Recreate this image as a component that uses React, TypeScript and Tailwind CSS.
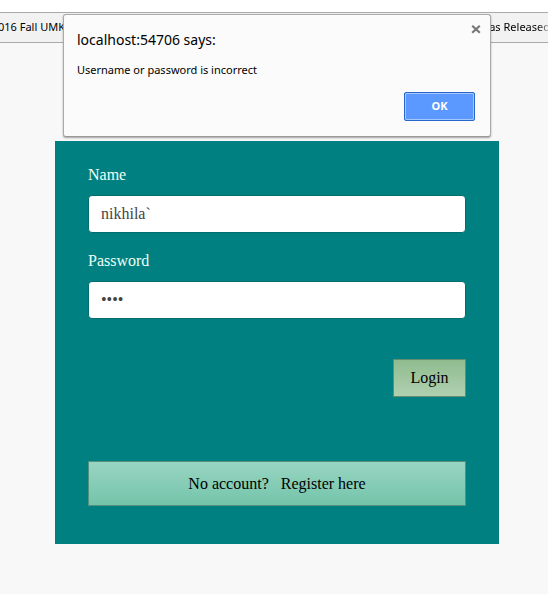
import { useState } from "react";

function BookmarksBar() {
  return (
    <nav
      aria-label="Bookmarks"
      className="mt-3 flex h-[31px] items-center justify-between overflow-hidden border-y border-[#aaaaaa] bg-[#f2f2f2] font-['Noto_Sans','Open_Sans',sans-serif] text-[11px] whitespace-nowrap text-black"
    >
      <a href="#umkc" className="-ml-0.5">016 Fall UMKC</a>
      <a href="#released" className="-mr-0.5 bg-linear-to-r from-black from-75% to-[#bbbbbb] bg-clip-text text-transparent">
        as Released
      </a>
    </nav>
  );
}

function AlertDialog({ onClose }: { onClose: () => void }) {
  return (
    <div
      role="alertdialog"
      aria-labelledby="alert-title"
      aria-describedby="alert-message"
      className="absolute top-3.5 right-[57px] left-[63px] rounded-[3px] border border-[#aaaaaa] border-b-[#999999] bg-[#fbfbfb] px-[13px] pt-[11px] pb-[15px] font-['Noto_Sans','Open_Sans',sans-serif] text-black shadow-[0_1px_2px_rgba(0,0,0,0.35)]"
    >
      <div className="flex items-start justify-between">
        <h1 id="alert-title" className="text-sm leading-7">localhost:54706 says:</h1>
        <button type="button" aria-label="Close" onClick={onClose} className="-mt-2.5 -mr-2 p-1">
          <svg width="10" height="18" viewBox="0 0 10 18" stroke="#777777" strokeWidth="2.2" className="block">
            <path d="M1.2 5.7 8.8 12.7M8.8 5.7 1.2 12.7" />
          </svg>
        </button>
      </div>
      <p id="alert-message" className="mt-1 text-[11px] leading-6">Username or password is incorrect</p>
      <div className="mt-2.5 flex justify-end pr-0.5">
        <button
          type="button"
          onClick={onClose}
          className="h-[29px] w-[71px] rounded-xs border border-[#2a66c8] bg-[#5b98ff] text-[11px] font-bold text-white shadow-[inset_0_0_0_1px_#a5c8ff]"
        >
          OK
        </button>
      </div>
    </div>
  );
}

type FieldProps = { id: string; label: string; type: string; initial: string };

function Field({ id, label, type, initial }: FieldProps) {
  const [value, setValue] = useState(initial);
  return (
    <div className="flex flex-col gap-2">
      <label htmlFor={id} className="text-base leading-6 text-[#f0fff8]">{label}</label>
      <input
        id={id}
        type={type}
        value={value}
        onChange={(e) => setValue(e.target.value)}
        className="h-[38px] w-full rounded-sm border border-[#006e6e] bg-white px-3 text-base text-[#444444] outline-none"
      />
    </div>
  );
}

export default function App() {
  const [open, setOpen] = useState(true);
  return (
    <div className="relative flow-root min-h-screen bg-white">
      <BookmarksBar />
      <main className="flow-root min-h-[calc(100vh-43px)] bg-[#f8f8f8]">
        <form
          onSubmit={(e) => e.preventDefault()}
          className="mt-[98px] mr-[49px] ml-[55px] flex flex-col bg-[#008080] px-[33px] pt-[22px] pb-[38px] font-['Liberation_Serif',serif] text-base"
        >
          <div className="flex flex-col gap-4">
            <Field id="name" label="Name" type="text" initial="nikhila`" />
            <Field id="password" label="Password" type="password" initial="pass" />
          </div>
          <button
            type="submit"
            className="mt-10 h-[38px] w-[73px] self-end border border-[#648c70] bg-linear-to-b from-[#8fbc8f] to-[#b0d0b0] text-black"
          >
            Login
          </button>
          <button
            type="button"
            className="mt-16 flex h-[45px] items-center justify-center gap-3 border border-[#55917f] bg-linear-to-b from-[#98d5c2] to-[#74c4aa] text-black"
          >
            <span>No account?</span>
            <span>Register here</span>
          </button>
        </form>
      </main>
      {open && <AlertDialog onClose={() => setOpen(false)} />}
    </div>
  );
}
